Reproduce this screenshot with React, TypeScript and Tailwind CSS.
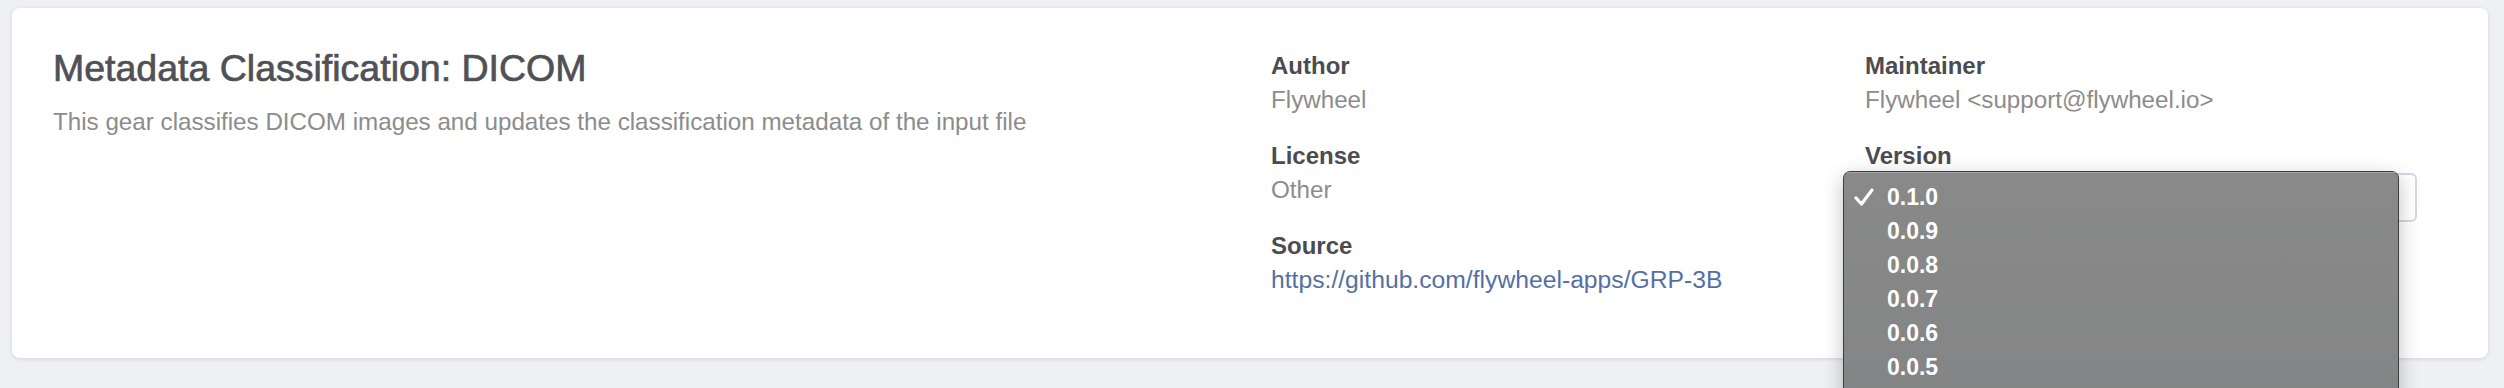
const versions = ["0.1.0", "0.0.9", "0.0.8", "0.0.7", "0.0.6", "0.0.5"];

function Field({ label, children }: { label: string; children: React.ReactNode }) {
  return (
    <div className="mb-[22px]">
      <div className="text-[24px] leading-[34px] font-bold text-[#4b4c50]">{label}</div>
      <div className="text-[24.2px] leading-[34px] text-[#8c8c8c]">{children}</div>
    </div>
  );
}

function VersionMenu() {
  return (
    <div className="absolute left-[1843px] top-[171px] w-[556px] h-[260px] rounded-t-[7px] border border-[#3d3d3d] bg-gradient-to-b from-[#898989] to-[#838485] shadow-[0_6px_20px_rgba(0,0,0,0.25)] pt-[8px]">
      <div className="absolute inset-x-0 top-0 h-px rounded-t-[7px] bg-white/25" />
      {versions.map((v, i) => (
        <div key={v} className="relative h-[34px] flex items-center pl-[43px] text-[23px] font-bold text-white">
          {i === 0 && (
            <svg className="absolute left-[10px] top-[8px]" width="20" height="18" viewBox="0 0 20 18">
              <path d="M2 10 L7.5 16 L18 2" fill="none" stroke="white" strokeWidth="3.2" strokeLinecap="round" strokeLinejoin="round" />
            </svg>
          )}
          {v}
        </div>
      ))}
    </div>
  );
}

export default function App() {
  return (
    <div className="relative h-[388px] w-full overflow-hidden bg-[#eff0f4] pt-[8px] pl-[12px] pr-[16px] font-['Liberation_Sans',Arial,sans-serif]">
      <div className="flex h-[350px] rounded-[8px] bg-white pl-[41px] pr-[71px] pt-[38px] shadow-[0_1px_4px_rgba(0,0,0,0.12)]">
        <div className="flex-1">
          <h1 className="text-[37.5px] leading-[44px] text-[#505155] [-webkit-text-stroke:0.7px_#505155]">
            Metadata Classification: DICOM
          </h1>
          <p className="mt-[15px] text-[24.2px] leading-[34px] text-[#8c8c8c]">
            This gear classifies DICOM images and updates the classification metadata of the input file
          </p>
        </div>
        <div className="w-[594px] pt-[3px]">
          <Field label="Author">Flywheel</Field>
          <Field label="License">Other</Field>
          <Field label="Source">
            <a href="#" className="text-[24.7px] text-[#5470a3]">https://github.com/flywheel-apps/GRP-3B</a>
          </Field>
        </div>
        <div className="w-[552px] pt-[3px]">
          <Field label="Maintainer">Flywheel &lt;support@flywheel.io&gt;</Field>
          <div>
            <div className="text-[24px] leading-[34px] font-bold text-[#4b4c50]">Version</div>
            <div className="h-[49px] rounded-[6px] border-2 border-[#d3d8e2] bg-white px-[20px] flex items-center text-[24px] text-[#505155]">
              0.1.0
            </div>
          </div>
        </div>
      </div>
      <VersionMenu />
    </div>
  );
}
